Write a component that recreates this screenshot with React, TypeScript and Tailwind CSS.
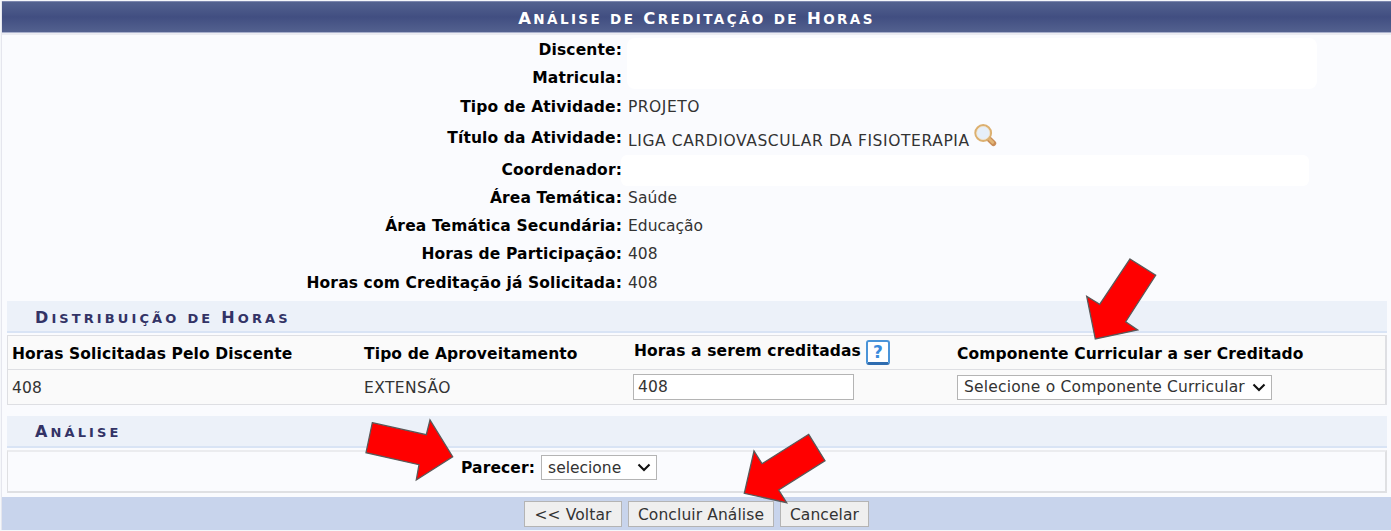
import React from "react";

const Small = ({ children }: { children: React.ReactNode }) => (
  <span className="inline-block uppercase">{children}</span>
);

const TitleWord = ({ children }: { children: React.ReactNode }) => (
  <span className="inline-block uppercase first-letter:text-[16.5px]">{children}</span>
);

const BarWord = ({ children }: { children: React.ReactNode }) => (
  <span className="inline-block uppercase first-letter:text-[16px]">{children}</span>
);

const Label = ({ children, className = "" }: { children: React.ReactNode; className?: string }) => (
  <div
    className={`flex items-center justify-end whitespace-nowrap font-bold tracking-[0.13px] text-black ${className}`}
  >
    <span>{children}</span>
  </div>
);

const Value = ({ children, className = "" }: { children?: React.ReactNode; className?: string }) => (
  <div className={`flex items-center whitespace-nowrap ${className}`}>{children}</div>
);

const Chevron = () => (
  <svg width="14" height="9" viewBox="0 0 14 9" fill="none" className="shrink-0">
    <path d="M1.5 1.5 7 7 12.5 1.5" stroke="#111" strokeWidth="2.1" />
  </svg>
);

const Magnifier = () => (
  <svg width="23" height="23" viewBox="0 0 23 23" fill="none">
    <path d="M15.3 15.3 19.4 19.2" stroke="#c98d58" strokeWidth="5.6" strokeLinecap="round" />
    <path d="M15 14.8 18.8 18.4" stroke="#e2b676" strokeWidth="2.8" strokeLinecap="round" />
    <circle cx="9.2" cy="9" r="7.8" fill="#e6eff9" stroke="#dcb070" strokeWidth="2.2" />
    <circle cx="9.2" cy="9" r="6.5" stroke="#f3e3ca" strokeWidth="0.8" />
  </svg>
);

const SectionBar = ({ children, className = "" }: { children: React.ReactNode; className?: string }) => (
  <div
    className={`flex items-center whitespace-nowrap border-b-2 border-[#d9e4f5] bg-[#ecf1f9] pl-7 text-[13px] font-bold tracking-[3.1px] text-[#333366] ${className}`}
  >
    {children}
  </div>
);

const FootButton = ({ children, className = "" }: { children: React.ReactNode; className?: string }) => (
  <button
    className={`flex h-[26px] items-center justify-center whitespace-nowrap border border-[#b4b4b4] bg-[#efefef] pt-px tracking-[0.1px] text-[#333] ${className}`}
  >
    {children}
  </button>
);

const arrows = [
  "1130,259 1155.7,275.3 1125.7,321.7 1137.7,330 1095.3,339 1086.7,296.3 1099.7,304.3",
  "372.3,422.7 426.3,434.7 430,420 452.7,456.7 416.3,480 419,464.7 366,452.7",
  "808.7,434.3 825,460.7 778.7,490 786.7,502.7 744.3,493.3 754,451 762,463.7",
];

export default function App() {
  return (
    <div className="relative h-[531px] w-[1391px] overflow-hidden bg-[#f5f7fa] pl-px pt-px font-['DejaVu_Sans',Verdana,sans-serif] text-[15.5px] leading-5 text-[#333]">
      <div className="flex h-[529px] flex-col border-l border-[#e5e6ee] bg-[#fafbfe]">
        <div className="flex h-8 items-center justify-center border-b border-t border-b-[#a9b0cc] border-t-[#7c87ae] bg-linear-to-b from-[#53628f] via-[#414e81] to-[#53618f] pt-[3px] text-white">
          <div className="flex items-baseline gap-x-2 whitespace-nowrap text-[13.5px] font-bold tracking-[2.4px]">
            <TitleWord>Análise</TitleWord>
            <Small>de</Small>
            <TitleWord>Creditação</TitleWord>
            <Small>de</Small>
            <TitleWord>Horas</TitleWord>
          </div>
        </div>
        <div className="h-0.5 bg-[#ebecf2]" />
        <div className="grid h-[266px] grid-cols-[620px_1fr] grid-rows-[28px_29px_28px_35px_29px_28px_28px_28px_29px] gap-x-[6px]">
          <Label className="pt-0.5">Discente:</Label>
          <div className="row-span-2 -ml-px mt-[3px] h-[51px] w-[690px] rounded-lg bg-white" />
          <Label>Matricula:</Label>
          <Label className="pt-px">Tipo de Atividade:</Label>
          <Value className="pt-px tracking-[0.5px]">PROJETO</Value>
          <Label>Título da Atividade:</Label>
          <Value>
            <span className="pt-[7px] tracking-[0.6px]">LIGA CARDIOVASCULAR DA FISIOTERAPIA</span>
            <span className="mb-1 ml-[4px]">
              <Magnifier />
            </span>
          </Value>
          <Label>Coordenador:</Label>
          <div className="-ml-[7px] h-[31px] w-[688px] rounded-md bg-white" />
          <Label>Área Temática:</Label>
          <Value className="tracking-[0.1px]">Saúde</Value>
          <Label>Área Temática Secundária:</Label>
          <Value>Educação</Value>
          <Label>Horas de Participação:</Label>
          <Value>408</Value>
          <Label>Horas com Creditação já Solicitada:</Label>
          <Value>408</Value>
        </div>

        <div className="ml-[5px] mr-[4px] grid grid-rows-[32px_2px_70px_11px_32px_2px_43px]">
          <SectionBar className="pt-[5px]">
            <div className="flex items-baseline gap-x-2">
              <BarWord>Distribuição</BarWord>
              <Small>de</Small>
              <BarWord>Horas</BarWord>
            </div>
          </SectionBar>
          <div />
          <div className="grid grid-cols-[352px_270px_323px_1fr] grid-rows-[33px_35px] border border-r-2 border-[#dedfe3] bg-[#fafafa] pl-1 tracking-[0.12px]">
            <Value className="pt-0.5 font-bold text-black">Horas Solicitadas Pelo Discente</Value>
            <Value className="pt-0.5 font-bold text-black">Tipo de Aproveitamento</Value>
            <Value className="font-bold text-black">
              <span className="pb-[3px]">Horas a serem creditadas</span>
              <span className="ml-[5px] flex h-[25px] w-6 items-center justify-center rounded-[3px] border-2 border-b-3 border-[#4a94d8] border-b-[#2f6db0] bg-white text-[17px] leading-none tracking-normal text-[#3a8bdc]">
                ?
              </span>
            </Value>
            <Value className="pt-0.5 font-bold text-black">Componente Curricular a ser Creditado</Value>
            <div className="-ml-1 flex items-center border-t border-[#dedfe3] pl-1 pt-px">408</div>
            <div className="flex items-center border-t border-[#dedfe3] pt-px tracking-[0.4px]">EXTENSÃO</div>
            <div className="flex items-center border-t border-[#dedfe3]">
              <div className="-ml-px mb-px flex h-[26px] w-[221px] items-center border border-[#b4b4b4] bg-white pl-1 pt-px">
                408
              </div>
            </div>
            <div className="flex items-center border-t border-[#dedfe3]">
              <div className="flex h-[25px] w-[315px] items-center justify-between whitespace-nowrap border border-[#b4b4b4] bg-white pl-1.5 pr-[5px]">
                <span className="tracking-[0.19px]">Selecione o Componente Curricular</span>
                <Chevron />
              </div>
            </div>
          </div>
          <div />
          <SectionBar className="pt-0.5">
            <BarWord>Análise</BarWord>
          </SectionBar>
          <div />
          <div className="flex items-center border-2 border-l border-[#dfe0e3] border-t-[#ebecef] pb-2 pl-[453px]">
            <span className="font-bold tracking-[0.12px] text-black">Parecer:</span>
            <div className="ml-[6px] flex h-[25px] w-[116px] items-center justify-between border border-[#b4b4b4] bg-white pl-1.5 pr-[5px]">
              <span>selecione</span>
              <Chevron />
            </div>
          </div>
        </div>
        <div className="mt-auto flex h-[33px] items-center justify-center gap-[6px] bg-[#c8d4ec] pt-px">
          <FootButton className="w-[98px]">&lt;&lt; Voltar</FootButton>
          <FootButton className="w-[146px]">Concluir Análise</FootButton>
          <FootButton className="w-[89px]">Cancelar</FootButton>
        </div>
      </div>
      <svg className="pointer-events-none absolute left-0 top-0" width="1391" height="531" viewBox="0 0 1391 531">
        {arrows.map((p) => (
          <polygon key={p} points={p} fill="#ff0000" stroke="#595959" strokeWidth="1.3" />
        ))}
      </svg>
    </div>
  );
}
